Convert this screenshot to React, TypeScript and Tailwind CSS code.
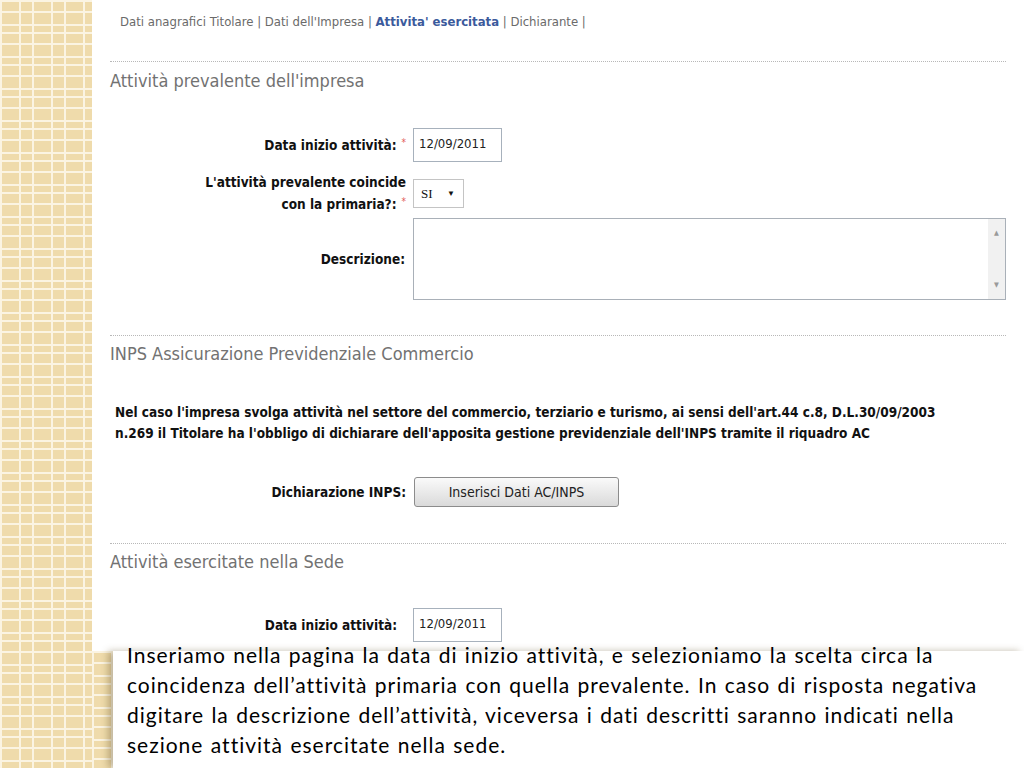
import React from "react"

const pattern =
  "bg-[#efdbab] bg-[image:repeating-linear-gradient(90deg,#fbf4e2_0_2px,transparent_2px_19px,#fbf4e2_19px_21px,transparent_21px_32px),repeating-linear-gradient(180deg,#fbf4e2_0_2px,transparent_2px_11px,#fbf4e2_11px_13px,transparent_13px_24px,#fbf4e2_24px_26px,transparent_26px_32px)]"

function Star() {
  return <span className="ml-[5px] align-[4px] text-[10px] font-normal text-[#e25a5a]">*</span>
}

function Divider({ className }: { className: string }) {
  return <div className={"border-t border-dotted border-[#b8b8b8] " + className} />
}

function DateInput() {
  return (
    <div className="flex h-[34px] w-[89px] items-start border border-[#a7b1bc] bg-white pl-[5px] pt-[5px] text-[13px] font-normal text-[#222]">
      12/09/2011
    </div>
  )
}

export default function App() {
  return (
    <div className="relative flex h-[768px] w-[1024px] overflow-hidden bg-white">
      <div className={"h-full w-[92px] shrink-0 " + pattern} />

      <div className="flex-1 pl-[18px] pr-[18px] font-['DejaVu_Sans_Condensed','DejaVu_Sans',sans-serif]">
        <nav className="pl-[10px] pt-[14px] text-[13px] leading-4 text-[#6a6a6a]">
          Dati anagrafici Titolare | Dati dell'Impresa |{" "}
          <span className="font-bold text-[#3b5a9c]">Attivita' esercitata</span> | Dichiarante |
        </nav>

        <Divider className="mt-[31px]" />
        <h2 className="mt-[9px] text-[18px] leading-5 text-[#727272]">Attività prevalente dell'impresa</h2>

        <div className="mt-[37px] grid grid-cols-[296px_1fr] items-center gap-x-[7px] text-[13.5px] font-bold text-[#111]">
          <div className="text-right">
            Data inizio attività:<Star />
          </div>
          <DateInput />

          <div className="mt-[11px] text-right leading-[19px]">
            L'attività prevalente coincide
            <br />
            con la primaria?:<Star />
          </div>
          <div className="mt-[11px] flex h-[29px] w-[51px] items-center justify-between border border-[#c4c4c4] bg-white pl-[7px] pr-[8px] font-['Liberation_Serif',serif] text-[13px] font-normal">
            <span>SI</span>
            <span className="text-[8px]">▼</span>
          </div>

          <div className="mt-[4px] pr-[1px] text-right">Descrizione:</div>
          <div className="mt-[4px] flex h-[82px] border border-[#a9b0b8] bg-white">
            <div className="flex-1" />
            <div className="flex w-[17px] flex-col items-center justify-between bg-[#f1f1f1] py-[9px] text-[7px] font-normal text-[#9a9a9a]">
              <span>▲</span>
              <span>▼</span>
            </div>
          </div>
        </div>

        <Divider className="mt-[35px]" />
        <h2 className="mt-[8px] text-[18px] leading-5 text-[#727272]">INPS Assicurazione Previdenziale Commercio</h2>

        <p className="mt-[38px] pl-[5px] text-[13.5px] font-bold leading-[21px] text-[#111]">
          Nel caso l'impresa svolga attività nel settore del commercio, terziario e turismo, ai sensi dell'art.44 c.8, D.L.30/09/2003
          <br />
          n.269 il Titolare ha l'obbligo di dichiarare dell'apposita gestione previdenziale dell'INPS tramite il riquadro AC
        </p>

        <div className="mt-[33px] grid grid-cols-[296px_1fr] items-center gap-x-[8px] text-[13.5px] font-bold text-[#111]">
          <div className="text-right">Dichiarazione INPS:</div>
          <button className="h-[30px] w-[205px] rounded-[3px] border border-[#8c8c8c] bg-gradient-to-b from-[#fafafa] to-[#dadada] text-[14px] font-normal text-[#222]">
            Inserisci Dati AC/INPS
          </button>
        </div>

        <Divider className="mt-[36px]" />
        <h2 className="mt-[8px] text-[18px] leading-5 text-[#727272]">Attività esercitate nella Sede</h2>

        <div className="mt-[36px] grid grid-cols-[296px_1fr] items-center gap-x-[7px] text-[13.5px] font-bold text-[#111]">
          <div className="pr-[9px] text-right">Data inizio attività:</div>
          <DateInput />
        </div>
      </div>

      <div className="absolute bottom-0 left-[92px] right-0 top-[651px] flex">
        <div className={"w-[21px] " + pattern} />
        <div className="flex-1 bg-white pl-[14px] shadow-[-5px_0_7px_rgba(90,70,30,0.35)]">
          <p className="-mt-[11px] font-['Lato',sans-serif] text-[21px] leading-[30px] tracking-[1px] text-black [font-variant-ligatures:none] [word-spacing:1px]">
            Inseriamo nella pagina la data di inizio attività, e selezioniamo la scelta circa la
            <br />
            coincidenza dell’attività primaria con quella prevalente. In caso di risposta negativa
            <br />
            digitare la descrizione dell’attività, viceversa i dati descritti saranno indicati nella
            <br />
            sezione attività esercitate nella sede.
          </p>
        </div>
      </div>
    </div>
  )
}
